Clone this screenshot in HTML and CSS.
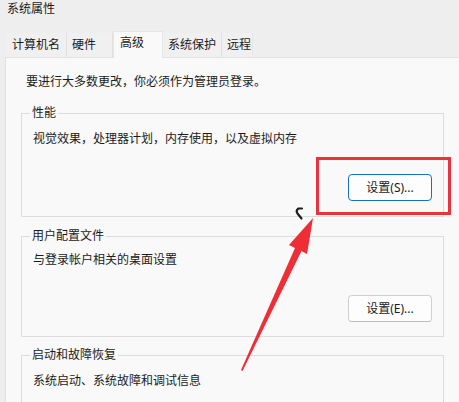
FILE: index.html
```html
<!DOCTYPE html>
<html lang="zh-CN">
<head>
<meta charset="utf-8">
<title>系统属性</title>
<link rel="stylesheet" href="styles.css">
</head>
<body>
<div class="window">
  <div class="titlebar">系统属性</div>
  <div class="tabs">
    <div class="tab t-name">计算机名</div>
    <div class="tab t-hw">硬件</div>
    <div class="tab active t-adv">高级</div>
    <div class="tab t-prot">系统保护</div>
    <div class="tab t-remote">远程</div>
  </div>
  <div class="panel">
    <div class="intro">要进行大多数更改，你必须作为管理员登录。</div>
    <div class="group g1">
      <span class="group-label">性能</span>
      <div class="desc d1">视觉效果，处理器计划，内存使用，以及虚拟内存</div>
      <button class="btn primary b1">设置(S)...</button>
    </div>
    <div class="group g2">
      <span class="group-label">用户配置文件</span>
      <div class="desc d2">与登录帐户相关的桌面设置</div>
      <button class="btn b2">设置(E)...</button>
    </div>
    <div class="group g3">
      <span class="group-label">启动和故障恢复</span>
      <div class="desc d3">系统启动、系统故障和调试信息</div>
    </div>
  </div>
  <div class="highlight"></div>
  <svg class="arrow" width="459" height="402" viewBox="0 0 459 402">
    <polygon points="313,218 307,254 301.5,251 242.5,371 241,370 295,248 289,245" fill="#ee2d35"/>
    <path d="M302 208.5 L298.5 208.5 Q295.5 210.5 297.5 213.5 Q299.5 216 301.5 218.5" fill="none" stroke="#1e1e1e" stroke-width="2.2" stroke-linecap="round" stroke-linejoin="round"/>
  </svg>
</div>
</body>
</html>
```
FILE: styles.css
```css
html, body {
  margin: 0;
  padding: 0;
}
body {
  width: 459px;
  height: 402px;
  overflow: hidden;
  background: #eeeeee;
  font-family: "Noto Sans", "Noto Sans CJK SC", sans-serif;
  font-size: 12px;
  color: #1b1b1b;
}
.window {
  position: relative;
  width: 459px;
  height: 402px;
}
.titlebar {
  height: 31px;
  padding-left: 7px;
  line-height: 18px;
  box-sizing: border-box;
}
.tabs {
  display: flex;
  align-items: flex-end;
  height: 26px;
  padding-left: 5px;
}
.tab {
  height: 24px;
  line-height: 24px;
  box-sizing: border-box;
  background: #f0f0f0;
  border-right: 1px solid #e0e0e0;
  white-space: nowrap;
}
.tab.active {
  height: 27px;
  line-height: 22px;
  background: #f9f9f9;
  margin-bottom: -1px;
  position: relative;
  border-left: 1px solid #e6e6e6;
  border-right: 1px solid #e6e6e6;
  border-top: 1px solid #e6e6e6;
}
.t-name { width: 62px; padding-left: 7px; }
.t-hw { width: 46px; padding-left: 5px; }
.t-adv { width: 50px; padding-left: 6px; }
.t-prot { width: 59px; padding-left: 5px; }
.t-remote { width: 31px; padding-left: 5px; border-right-color: #e6e6e6; }
.panel {
  margin-left: 5px;
  background: #f9f9f9;
  border-top: 1px solid #e2e2e2;
  border-left: 1px solid #e3e3e3;
  padding: 17px 15px 0 15px;
  height: 345px;
  box-sizing: border-box;
}
.intro {
  line-height: 14px;
  margin-left: 5px;
}
.group {
  display: flex;
  flex-direction: column;
  align-items: flex-start;
  border: 1px solid #dcdcdc;
  padding: 0 11px 0 11px;
}
.group-label {
  margin: -8px 0 0 -3px;
  padding: 0 2px;
  line-height: 14px;
  background: #f9f9f9;
}
.desc {
  line-height: 14px;
}
.g1 { margin-top: 24px; padding-bottom: 15px; }
.d1 { margin-top: 12px; }
.b1 { margin-top: 28px; }
.g2 { margin-top: 19px; padding-bottom: 14px; }
.d2 { margin-top: 10px; }
.b2 { margin-top: 28px; }
.g3 { margin-top: 18px; height: 60px; }
.d3 { margin-top: 12px; }
.btn {
  align-self: flex-end;
  width: 84px;
  height: 27px;
  box-sizing: border-box;
  font-family: "Noto Sans", "Noto Sans CJK SC", sans-serif;
  font-size: 12px;
  color: #1b1b1b;
  background: #fdfdfd;
  border: 1px solid #d0d0d0;
  border-bottom-color: #bdbdbd;
  border-radius: 4px;
  padding: 0;
  line-height: 24px;
}
.btn.primary {
  border: 1px solid #1a6fc4;
}
.highlight {
  position: absolute;
  left: 316px;
  top: 157px;
  width: 135px;
  height: 58px;
  box-sizing: border-box;
  border: 3px solid #e8343c;
}
.arrow {
  position: absolute;
  left: 0;
  top: 0;
  pointer-events: none;
}
```
